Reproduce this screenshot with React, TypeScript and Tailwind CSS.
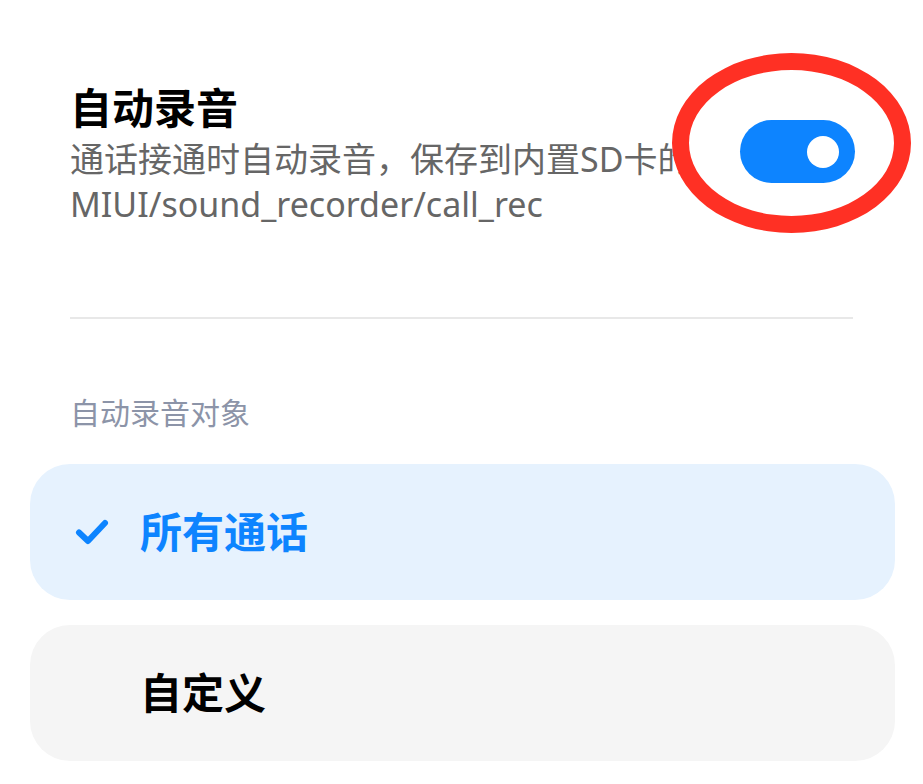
import React from 'react';

const font = { fontFamily: '"Noto Sans", "Noto Sans CJK SC", sans-serif' };

function Toggle({ on }: { on: boolean }) {
  return (
    <div
      className={`relative z-[2] flex h-[63px] w-[115px] flex-none items-center rounded-full px-[16px] ${
        on ? 'justify-end bg-[#0d84ff]' : 'justify-start bg-[#e0e0e0]'
      }`}
    >
      <div className="h-[32px] w-[32px] rounded-full bg-white" />
    </div>
  );
}

function Check() {
  return (
    <svg width="34" height="28" viewBox="0 0 34 28" fill="none" className="flex-none">
      <path
        d="M4 14.5 L13 23 L30 5"
        stroke="#0d84ff"
        strokeWidth="6"
        strokeLinecap="round"
        strokeLinejoin="round"
      />
    </svg>
  );
}

const options = [
  { label: '所有通话', selected: true },
  { label: '自定义', selected: false },
];

export default function App() {
  return (
    <div className="relative h-[784px] w-[923px] overflow-hidden bg-white" style={font}>
      {/* Header row */}
      <div className="flex items-start pl-[70px] pr-[68px] pt-[82px]">
        <div className="min-w-0 flex-1 whitespace-nowrap">
          <div className="text-[42px] font-bold leading-[52px] text-black">自动录音</div>
          <div className="mt-[3px] text-[34px] leading-[45px] text-[#666666]">
            通话接通时自动录音，保存到内置SD卡的
            <br />
            MIUI/sound_recorder/call_rec
          </div>
        </div>
        <div className="mt-[38px]">
          <Toggle on />
        </div>
      </div>

      {/* Red annotation ring */}
      <div className="absolute left-[672px] top-[53px] z-[1] h-[180px] w-[239px] rounded-[50%] border-[17px] border-[#ff3024] bg-white" />

      {/* Divider */}
      <div className="mx-[70px] mt-[90px] h-[2px] bg-[#e8e8e8]" />

      {/* Section */}
      <div className="px-[70px] pt-[74px] text-[30px] leading-[40px] text-[#8c94a8]">自动录音对象</div>

      <div className="mt-[31px] flex flex-col gap-[25px] pl-[30px] pr-[28px]">
        {options.map(({ label, selected }) => (
          <div
            key={label}
            className={`flex h-[136px] items-center rounded-[40px] pl-[45px] ${
              selected ? 'bg-[#e6f2fe]' : 'bg-[#f5f5f5]'
            }`}
          >
            <div className="flex w-[65px] flex-none items-center">{selected && <Check />}</div>
            <span
              className={`text-[42px] font-bold leading-[52px] ${
                selected ? 'text-[#0d84ff]' : 'text-black'
              }`}
            >
              {label}
            </span>
          </div>
        ))}
      </div>
    </div>
  );
}
